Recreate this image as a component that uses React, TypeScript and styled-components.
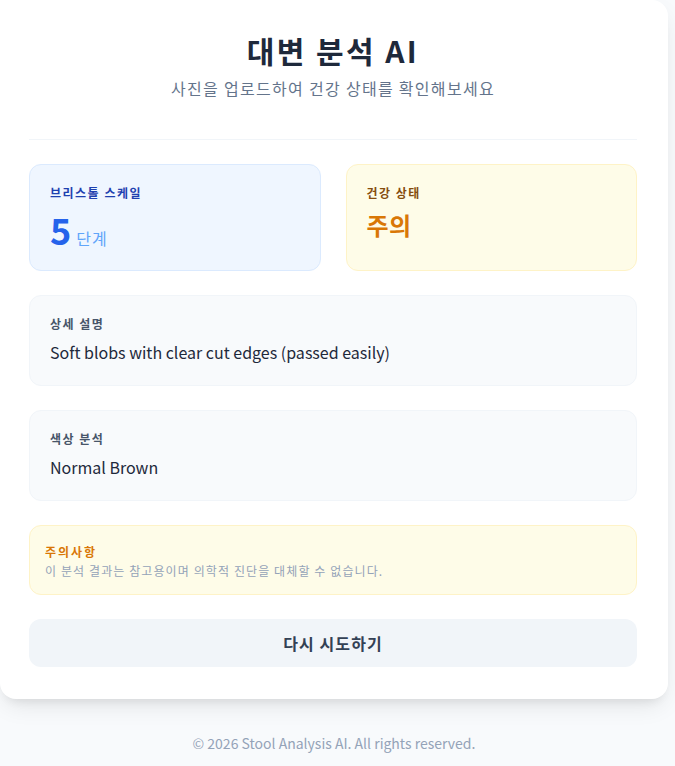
import React from "react";
import styled, { createGlobalStyle } from "styled-components";

const GlobalStyle = createGlobalStyle`
  html, body {
    margin: 0;
    padding: 0;
    background: #f8fafc;
    font-family: "Noto Sans CJK KR", "Noto Sans", sans-serif;
    color: #1e293b;
  }
  * { box-sizing: border-box; }
`;

const Page = styled.div`
  min-height: 766px;
  display: flex;
  flex-direction: column;
  align-items: flex-start;
`;

const Card = styled.main`
  width: 668px;
  background: #ffffff;
  border-radius: 0 16px 16px 16px;
  box-shadow: 0 10px 25px -5px rgba(0, 0, 0, 0.1), 0 8px 10px -6px rgba(0, 0, 0, 0.08);
  padding: 32px 31px 32px 29px;
  display: flex;
  flex-direction: column;
  gap: 24px;
`;

const Header = styled.header`
  text-align: center;
  padding-bottom: 39px;
  border-bottom: 1px solid #f1f5f9;
`;

const Title = styled.h1`
  margin: 0;
  font-size: 30px;
  line-height: 36px;
  font-weight: 700;
  letter-spacing: 2.4px;
  color: #1e293b;
`;

const Subtitle = styled.p`
  margin: 8px 0 0;
  font-size: 16px;
  line-height: 24px;
  letter-spacing: 1.3px;
  color: #64748b;
`;

const StatGrid = styled.div`
  display: grid;
  grid-template-columns: 1fr 1fr;
  gap: 25px;
`;

const tones = {
  blue: { bg: "#eff6ff", border: "#dbeafe", label: "#1e40af" },
  yellow: { bg: "#fefce8", border: "#fef3c7", label: "#854d0e" },
  gray: { bg: "#f8fafc", border: "#f1f5f9", label: "#475569" },
};

type Tone = keyof typeof tones;

const Box = styled.section<{ $tone: Tone }>`
  background: ${(p) => tones[p.$tone].bg};
  border: 1px solid ${(p) => tones[p.$tone].border};
  border-radius: 12px;
  padding: 20px;
`;

const Label = styled.div<{ $tone: Tone }>`
  font-size: 12px;
  line-height: 16px;
  font-weight: 700;
  letter-spacing: 1.5px;
  color: ${(p) => tones[p.$tone].label};
`;

const ValueRow = styled.div`
  margin-top: 8px;
  display: flex;
  align-items: baseline;
  gap: 5px;
`;

const BigNumber = styled.span`
  font-size: 36px;
  line-height: 40px;
  font-weight: 700;
  color: #2563eb;
`;

const Unit = styled.span`
  font-size: 16px;
  letter-spacing: 1px;
  color: #60a5fa;
`;

const Status = styled.div`
  margin-top: 8px;
  font-size: 24px;
  line-height: 32px;
  font-weight: 700;
  letter-spacing: 0.5px;
  color: #d97706;
`;

const BodyText = styled.p`
  margin: 8px 0 0;
  font-size: 16px;
  line-height: 25px;
  color: #1e293b;
`;

const Notice = styled.section`
  background: #fefce8;
  border: 1px solid #fef3c7;
  border-radius: 12px;
  padding: 16px 15px 15px;
`;

const NoticeTitle = styled.div`
  font-size: 12px;
  line-height: 20px;
  font-weight: 700;
  letter-spacing: 2px;
  color: #d97706;
`;

const NoticeText = styled.p`
  margin: 1px 0 0;
  font-size: 12px;
  line-height: 16px;
  letter-spacing: 1.1px;
  color: #94a3b8;
`;

const RetryButton = styled.button`
  width: 100%;
  height: 48px;
  border: none;
  border-radius: 12px;
  background: #f1f5f9;
  color: #334155;
  font-family: inherit;
  font-size: 16px;
  font-weight: 700;
  letter-spacing: 1.1px;
  cursor: pointer;
`;

const Footer = styled.footer`
  width: 668px;
  text-align: center;
  margin-top: 34px;
  font-size: 14px;
  line-height: 20px;
  color: #94a3b8;
`;

export default function App() {
  return (
    <>
      <GlobalStyle />
      <Page>
        <Card>
          <Header>
            <Title>대변 분석 AI</Title>
            <Subtitle>사진을 업로드하여 건강 상태를 확인해보세요</Subtitle>
          </Header>

          <StatGrid>
            <Box $tone="blue">
              <Label $tone="blue">브리스톨 스케일</Label>
              <ValueRow>
                <BigNumber>5</BigNumber>
                <Unit>단계</Unit>
              </ValueRow>
            </Box>
            <Box $tone="yellow">
              <Label $tone="yellow">건강 상태</Label>
              <Status>주의</Status>
            </Box>
          </StatGrid>

          <Box $tone="gray">
            <Label $tone="gray">상세 설명</Label>
            <BodyText>Soft blobs with clear cut edges (passed easily)</BodyText>
          </Box>

          <Box $tone="gray">
            <Label $tone="gray">색상 분석</Label>
            <BodyText>Normal Brown</BodyText>
          </Box>

          <Notice>
            <NoticeTitle>주의사항</NoticeTitle>
            <NoticeText>이 분석 결과는 참고용이며 의학적 진단을 대체할 수 없습니다.</NoticeText>
          </Notice>

          <RetryButton>다시 시도하기</RetryButton>
        </Card>
        <Footer>© 2026 Stool Analysis AI. All rights reserved.</Footer>
      </Page>
    </>
  );
}
